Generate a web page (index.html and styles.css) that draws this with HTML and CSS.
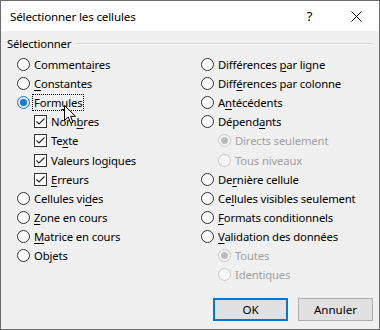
FILE: index.html
```html
<!DOCTYPE html>
<html lang="fr">
<head>
  <meta charset="UTF-8">
  <title>Sélectionner les cellules</title>
  <link rel="stylesheet" href="styles.css">
</head>
<body>
  <div class="dialog">
    <div class="titlebar">
      <span class="title">Sélectionner les cellules</span>
      <span class="help">?</span>
      <span class="close">
        <svg width="11" height="11" viewBox="0 0 11 11"><path d="M0.5 0.5 L10.5 10.5 M10.5 0.5 L0.5 10.5" stroke="#000" stroke-width="1" fill="none"/></svg>
      </span>
    </div>

    <div class="content">
      <div class="group-head">
        <span class="group-label">Sélectionner</span>
        <span class="group-line"></span>
      </div>

      <div class="columns">
        <div class="col col-left">
          <div class="opt"><span class="radio"></span><span>Commenta<u>i</u>res</span></div>
          <div class="opt"><span class="radio"></span><span><u>C</u>onstantes</span></div>
          <div class="opt"><span class="radio checked hot"></span><span class="focus">Form<u>u</u>les</span></div>
          <div class="opt sub"><span class="check"><svg width="11" height="11" viewBox="0 0 11 11"><path d="M1.5 5.5 L4 8 L9.5 2.5" stroke="#222" stroke-width="1.1" fill="none"/></svg></span><span>Nom<u>b</u>res</span></div>
          <div class="opt sub"><span class="check"><svg width="11" height="11" viewBox="0 0 11 11"><path d="M1.5 5.5 L4 8 L9.5 2.5" stroke="#222" stroke-width="1.1" fill="none"/></svg></span><span>Te<u>x</u>te</span></div>
          <div class="opt sub"><span class="check"><svg width="11" height="11" viewBox="0 0 11 11"><path d="M1.5 5.5 L4 8 L9.5 2.5" stroke="#222" stroke-width="1.1" fill="none"/></svg></span><span>Valeurs lo<u>g</u>iques</span></div>
          <div class="opt sub"><span class="check"><svg width="11" height="11" viewBox="0 0 11 11"><path d="M1.5 5.5 L4 8 L9.5 2.5" stroke="#222" stroke-width="1.1" fill="none"/></svg></span><span><u>E</u>rreurs</span></div>
          <div class="opt"><span class="radio"></span><span>Cellules vi<u>d</u>es</span></div>
          <div class="opt"><span class="radio"></span><span><u>Z</u>one en cours</span></div>
          <div class="opt"><span class="radio"></span><span><u>M</u>atrice en cours</span></div>
          <div class="opt"><span class="radio"></span><span>Ob<u>j</u>ets</span></div>
        </div>

        <div class="col col-right">
          <div class="opt"><span class="radio"></span><span>Différences <u>p</u>ar ligne</span></div>
          <div class="opt"><span class="radio"></span><span>Diff<u>é</u>rences par colonne</span></div>
          <div class="opt"><span class="radio"></span><span>A<u>n</u>técédents</span></div>
          <div class="opt"><span class="radio"></span><span>Dépend<u>a</u>nts</span></div>
          <div class="opt sub disabled"><span class="radio checked"></span><span>Directs seulement</span></div>
          <div class="opt sub disabled"><span class="radio"></span><span>Tous niveaux</span></div>
          <div class="opt"><span class="radio"></span><span>De<u>r</u>nière cellule</span></div>
          <div class="opt"><span class="radio"></span><span>Ce<u>l</u>lules visibles seulement</span></div>
          <div class="opt"><span class="radio"></span><span><u>F</u>ormats conditionnels</span></div>
          <div class="opt"><span class="radio"></span><span><u>V</u>alidation des données</span></div>
          <div class="opt sub disabled"><span class="radio checked"></span><span>Toutes</span></div>
          <div class="opt sub disabled"><span class="radio"></span><span>Identiques</span></div>
        </div>
      </div>

      <div class="buttons">
        <button class="btn btn-default">OK</button>
        <button class="btn">Annuler</button>
      </div>
    </div>

    <svg class="cursor" width="13" height="20" viewBox="0 0 13 20">
      <path d="M0.5 0.5 L0.5 15.5 L4.2 12 L6.8 18.2 L9 17.3 L6.5 11.3 L11.5 11.3 Z" fill="#fff" stroke="#000" stroke-width="1"/>
    </svg>
  </div>
</body>
</html>
```

FILE: styles.css
```css
* {
  box-sizing: border-box;
  margin: 0;
  padding: 0;
}

body {
  font-family: 'Segoe UI', 'Noto Sans', 'Open Sans', sans-serif;
  font-size: 11.3px;
  letter-spacing: -0.15px;
  color: #000;
  background: #f0f0f0;
}

.dialog {
  position: relative;
  width: 380px;
  height: 330px;
  border: 1px solid #6b6b6b;
  background: #f0f0f0;
  display: flex;
  flex-direction: column;
}

.titlebar {
  height: 30px;
  background: #fff;
  display: flex;
  align-items: center;
  padding-left: 9px;
}

.title {
  flex: 1;
  font-size: 11.6px;
}

.help {
  width: 47px;
  text-align: center;
  font-size: 13px;
}

.close {
  width: 46px;
  display: flex;
  justify-content: center;
  align-items: center;
}

.content {
  flex: 1;
  padding: 4px 6px 0 6px;
  display: flex;
  flex-direction: column;
}

.group-head {
  display: flex;
  align-items: center;
  height: 17px;
  gap: 4px;
}

.group-line {
  flex: 1;
  border-top: 1px solid #d7d7d7;
  border-bottom: 1px solid #fff;
  margin-top: 1px;
}

.columns {
  display: flex;
  padding-left: 10px;
  margin-top: 3px;
}

.col-left {
  width: 184px;
}

.col-right {
  flex: 1;
}

.opt {
  height: 19.1px;
  display: flex;
  align-items: center;
  gap: 4px;
  white-space: nowrap;
}

.opt.sub {
  padding-left: 17px;
}

.opt u {
  text-decoration-thickness: 1px;
  text-underline-offset: 2px;
}

.radio {
  width: 13px;
  height: 13px;
  border: 1px solid #333;
  border-radius: 50%;
  background: #fff;
  flex-shrink: 0;
  position: relative;
}

.radio.checked::after {
  content: '';
  position: absolute;
  left: 2px;
  top: 2px;
  width: 7px;
  height: 7px;
  border-radius: 50%;
  background: #1e78d2;
}

.radio.hot {
  border-color: #1e78d2;
  background: #d9ebf9;
}

.disabled {
  color: #a0a0a0;
}

.disabled .radio {
  border-color: #c6c6c6;
  background: #f7f7f7;
}

.disabled .radio.checked::after {
  background: #bcbcbc;
}

.check {
  width: 13px;
  height: 13px;
  border: 1px solid #333;
  background: #fff;
  flex-shrink: 0;
  display: flex;
  align-items: center;
  justify-content: center;
}

.focus {
  outline: 1px dotted #000;
  outline-offset: 0;
  padding: 0 1px;
  margin-left: -1px;
}

.buttons {
  display: flex;
  justify-content: flex-end;
  gap: 10px;
  margin-top: auto;
  margin-bottom: 8px;
}

.btn {
  width: 75px;
  height: 23px;
  font-family: inherit;
  font-size: 11.6px;
  background: #e1e1e1;
  border: 1px solid #adadad;
  color: #000;
}

.btn-default {
  border: 2px solid #0078d7;
}

.cursor {
  position: absolute;
  left: 63px;
  top: 104px;
}
```
